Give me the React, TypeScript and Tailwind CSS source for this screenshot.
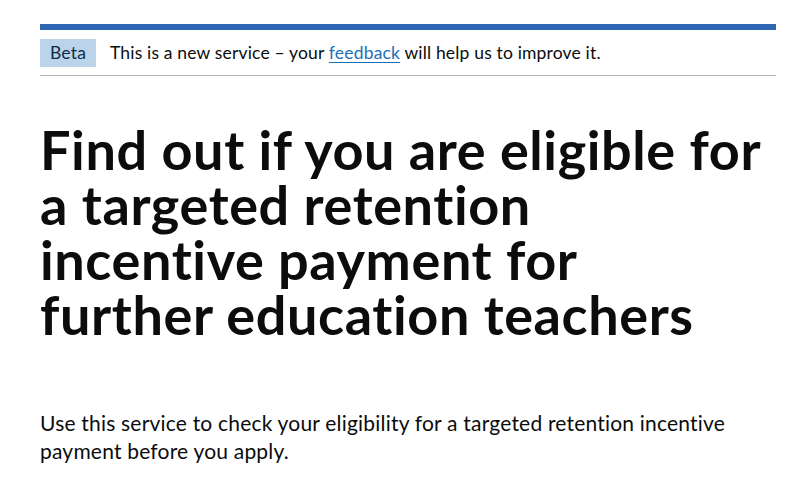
export default function App() {
  return (
    <div className="min-h-screen bg-white pl-10 pr-[30px] pt-6 text-[#0b0c0c] font-['Lato','Liberation_Sans',Arial,sans-serif] [font-variant-ligatures:none]">
      <div className="h-[6px] bg-[#2f67b4]" />

      <div className="flex items-center gap-[14px] border-b border-[#b1b4b6] pt-[9px] pb-[8px] tracking-[0.17px]">
        <strong className="flex h-[28px] items-center bg-[#bbd4ea] px-[10px] text-[17.5px] font-normal text-[#0c2d4a]">
          Beta
        </strong>
        <span className="text-[17.5px] leading-[22px]">
          This is a new service – your{" "}
          <a href="#" className="text-[#1d70b8] underline decoration-1 underline-offset-[3px]">
            feedback
          </a>{" "}
          will help us to improve it.
        </span>
      </div>

      <main>
        <h1 className="mt-[46px] text-[54px] font-bold leading-[55px] tracking-[0.6px]">
          Find out if you are eligible for
          <br />
          a targeted retention
          <br />
          incentive payment for
          <br />
          further education teachers
        </h1>
        <p className="mt-[67px] text-[21px] leading-[28px] tracking-[0.2px]">
          Use this service to check your eligibility for a targeted retention incentive
          <br />
          payment before you apply.
        </p>
      </main>
    </div>
  );
}
